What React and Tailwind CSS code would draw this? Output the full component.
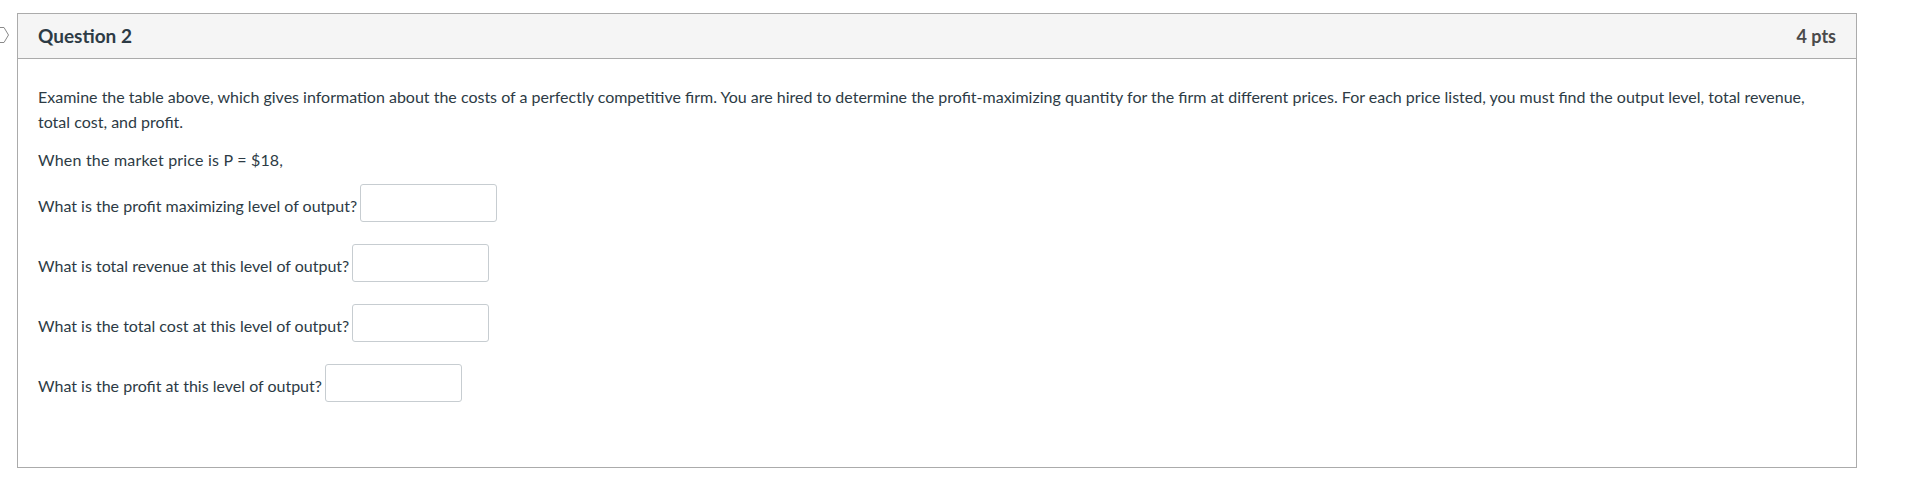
export default function App() {
  const questions = [
    "What is the profit maximizing level of output?",
    "What is total revenue at this level of output?",
    "What is the total cost at this level of output?",
    "What is the profit at this level of output?",
  ];

  return (
    <div
      className="relative w-[1925px] h-[485px] bg-white pt-[13px] pl-[17px] text-[#2d3b45]"
      style={{ fontFamily: "Lato, 'Open Sans', sans-serif" }}
    >
      {/* flag marker, mostly cut off at the left edge */}
      <svg
        className="absolute left-0 top-[26px]"
        width="10"
        height="18"
        viewBox="0 0 10 18"
        fill="none"
      >
        <path d="M-2 1.5 L4 1.5 L8.5 9 L4 16.5 L-2 16.5" stroke="#8a8a8a" strokeWidth="1" />
      </svg>

      <div className="w-[1840px] border border-[#ababab]">
        {/* header */}
        <div className="h-[45px] bg-[#f5f5f5] border-b border-[#ababab] pl-5 pr-5 flex items-center justify-between">
          <span className="text-[19px] font-bold">Question 2</span>
          <span className="text-lg font-bold text-[#4a4a4a]">4 pts</span>
        </div>

        {/* body */}
        <div className="pl-5 pr-5 pt-[25px] pb-[65px] text-base leading-[25px]">
          <p>
            Examine the table above, which gives information about the costs of a perfectly competitive firm. You are
            hired to determine the profit-maximizing quantity for the firm at different prices. For each price listed, you
            must find the output level, total revenue, total cost, and profit.
          </p>
          <p className="mt-[13px] tracking-[0.2px]">When the market price is P = $18,</p>

          <div className="mt-[12px] flex flex-col gap-[22px]">
            {questions.map((q, i) => (
              <div key={i} className="flex items-center gap-[3px]">
                <span className="pt-[5px]">{q}</span>
                <input className="w-[137px] h-[38px] border border-[#c7cdd1] rounded-[3px] bg-white" />
              </div>
            ))}
          </div>
        </div>
      </div>
    </div>
  );
}
